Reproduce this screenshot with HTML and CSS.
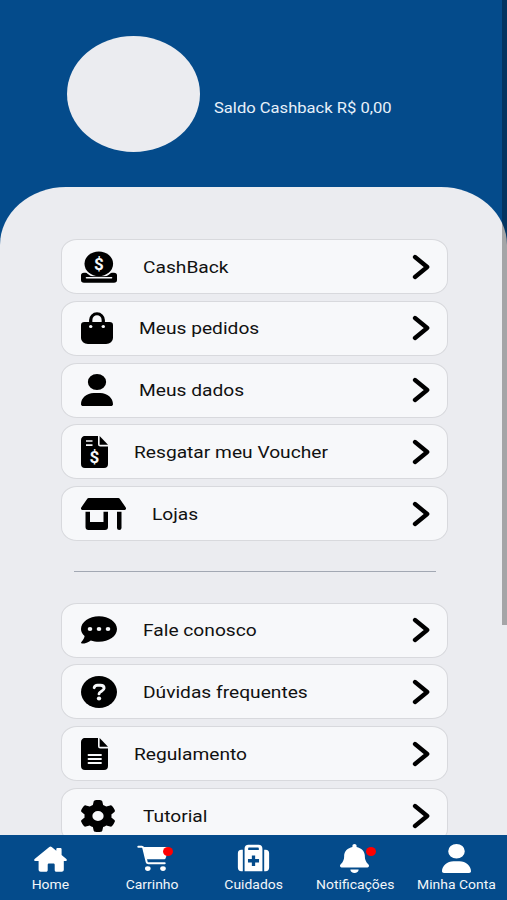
FILE: index.html
```html
<!DOCTYPE html>
<html lang="pt-BR">
<head>
    <meta charset="UTF-8">
    <meta name="viewport" content="width=device-width, initial-scale=1.0">
    <title>Minha Conta</title>
    <link rel="stylesheet" href="styles.css">
</head>
<body>

<svg class="defs" width="0" height="0">
    <symbol id="chevron" viewBox="0 0 18 26">
        <path d="M3 3l12.200 10L3 23" fill="none" stroke="#000" stroke-width="4.300" stroke-linecap="round" stroke-linejoin="round"/>
    </symbol>
</svg>

<header class="header">
    <div class="avatar"></div>
    <p class="saldo">Saldo Cashback R$ 0,00</p>
</header>

<main class="content">
    <div class="menu">
        <a class="item">
            <svg class="icon" width="36" height="32" viewBox="0 0 36 32">
                <path d="M3 21.700h30a3 2.700 0 0 1 3 2.700V29a3 2.700 0 0 1-3 2.700H3A3 2.700 0 0 1 0 29v-4.600a3 2.700 0 0 1 3-2.700z"/>
                <ellipse cx="17.800" cy="12.900" rx="16" ry="13.900" fill="#f7f8fa"/>
                <path d="M4 25.200h28v3H4z"/>
                <ellipse cx="17.800" cy="12.800" rx="14.300" ry="12.400"/>
                <path d="M5.500 26.700h25" stroke="#f7f8fa" stroke-width="1.600" stroke-linecap="round"/>
                <text class="sign" x="17.800" y="18.800">$</text>
            </svg>
            <span>CashBack</span>
            <svg class="chevron" width="18" height="26"><use href="#chevron"/></svg>
        </a>
        <a class="item">
            <svg class="icon" width="32" height="32" viewBox="0 0 448 512" preserveAspectRatio="none">
                <path d="M136 176v-48a88 100 0 0 1 176 0v48" fill="none" stroke="#000" stroke-width="46"/>
                <path d="M48 160h352a48 48 0 0 1 48 48v208a96 96 0 0 1-96 96H96a96 96 0 0 1-96-96V208a48 48 0 0 1 48-48z"/>
                <circle cx="136" cy="232" r="24" fill="#f7f8fa"/>
                <circle cx="312" cy="232" r="24" fill="#f7f8fa"/>
            </svg>
            <span>Meus pedidos</span>
            <svg class="chevron" width="18" height="26"><use href="#chevron"/></svg>
        </a>
        <a class="item">
            <svg class="icon" width="32" height="32" viewBox="0 0 448 512" preserveAspectRatio="none">
                <path d="M224 256A128 128 0 1 0 224 0a128 128 0 1 0 0 256zm-45.700 48C79.800 304 0 383.800 0 482.300C0 498.700 13.300 512 29.700 512H418.300c16.400 0 29.700-13.300 29.700-29.700C448 383.800 368.200 304 269.700 304H178.300z"/>
            </svg>
            <span>Meus dados</span>
            <svg class="chevron" width="18" height="26"><use href="#chevron"/></svg>
        </a>
        <a class="item">
            <svg class="icon" width="27" height="32" viewBox="0 0 27 32">
                <path d="M4.500 0h12.500v8a2.500 2.500 0 0 0 2.500 2.500H27V28a4 4 0 0 1-4 4H4a4 4 0 0 1-4-4V4a4 4 0 0 1 4.500-4z"/>
                <path d="M18.600 0L27 8.700h-8.400z"/>
                <path d="M5 5h6.500M5 9.200h6.500" stroke="#f7f8fa" stroke-width="1.700"/>
                <text class="sign" x="13.500" y="26.800">$</text>
            </svg>
            <span>Resgatar meu Voucher</span>
            <svg class="chevron" width="18" height="26"><use href="#chevron"/></svg>
        </a>
        <a class="item">
            <svg class="icon" width="45" height="32" viewBox="0 0 45 32">
                <path d="M7.800 0h29.400a2 2 0 0 1 1.700.9l5.700 8.300c1 1.600.1 2.800-1.600 2.800H2c-1.700 0-2.600-1.200-1.600-2.800L6.100.9A2 2 0 0 1 7.800 0z"/>
                <path d="M4.500 13.800H9V24h13.500V13.800H27V29a3 3 0 0 1-3 3H7.500a3 3 0 0 1-3-3zM36 13.800h4.500V30a2.250 2 0 0 1-4.500 0z"/>
            </svg>
            <span>Lojas</span>
            <svg class="chevron" width="18" height="26"><use href="#chevron"/></svg>
        </a>
    </div>

    <hr class="divider">

    <div class="menu">
        <a class="item">
            <svg class="icon" width="36" height="32" viewBox="0 0 36 32">
                <path d="M18 2.300c9.900 0 18 5.700 18 12.800s-8.100 12.700-18 12.700c-3 0-5.800-.5-8.200-1.400C7.400 28.200 4.200 29.600 1 29.600c-1 0-1.300-.9-.6-1.600 1.700-1.700 3-3.800 3.200-5.900C1.300 20.100 0 17.700 0 15.100 0 8 8.100 2.300 18 2.300z"/>
                <g fill="#f7f8fa"><ellipse cx="9" cy="15" rx="2.300" ry="2"/><ellipse cx="18" cy="15" rx="2.300" ry="2"/><ellipse cx="27" cy="15" rx="2.300" ry="2"/></g>
            </svg>
            <span>Fale conosco</span>
            <svg class="chevron" width="18" height="26"><use href="#chevron"/></svg>
        </a>
        <a class="item">
            <svg class="icon" width="36" height="32" viewBox="0 0 36 32">
                <ellipse cx="18" cy="16" rx="18" ry="16"/>
                <path d="M13.200 11.700c.4-1.600 1.500-2.400 3.300-2.400h2.800c2.300 0 3.800 1.200 3.800 3 0 2.800-5.100 2.900-5.100 5.600" fill="none" stroke="#f7f8fa" stroke-width="2.900" stroke-linecap="round"/>
                <ellipse cx="18" cy="22.600" rx="2.200" ry="2" fill="#f7f8fa"/>
            </svg>
            <span>Dúvidas frequentes</span>
            <svg class="chevron" width="18" height="26"><use href="#chevron"/></svg>
        </a>
        <a class="item">
            <svg class="icon" width="27" height="32" viewBox="0 0 27 32">
                <path d="M4.500 0h12.500v8a2.500 2.500 0 0 0 2.500 2.500H27V28a4 4 0 0 1-4 4H4a4 4 0 0 1-4-4V4a4 4 0 0 1 4.500-4z"/>
                <path d="M18.600 0L27 8.700h-8.400z"/>
                <path d="M7.500 17h12.500M7.500 21h12.500M7.500 25h12.500" stroke="#f7f8fa" stroke-width="1.800" stroke-linecap="round"/>
            </svg>
            <span>Regulamento</span>
            <svg class="chevron" width="18" height="26"><use href="#chevron"/></svg>
        </a>
        <a class="item">
            <svg class="icon gear" width="36" height="32" viewBox="0 0 512 512" preserveAspectRatio="none">
                <path d="M495.900 166.600c3.200 8.700 .5 18.400-6.400 24.600l-43.300 39.400c1.100 8.300 1.700 16.800 1.700 25.400s-.6 17.100-1.700 25.400l43.300 39.400c6.900 6.200 9.600 15.900 6.400 24.600c-4.400 11.900-9.700 23.300-15.800 34.300l-4.700 8.100c-6.600 11-14 21.400-22.100 31.200c-5.900 7.200-15.700 9.600-24.500 6.800l-55.700-17.700c-13.400 10.300-28.200 18.900-44 25.400l-12.500 57.100c-2 9.100-9 16.300-18.200 17.800c-13.800 2.300-28 3.500-42.500 3.500s-28.700-1.200-42.500-3.500c-9.200-1.500-16.200-8.700-18.200-17.800l-12.500-57.100c-15.800-6.500-30.600-15.100-44-25.400L83.100 425.900c-8.800 2.800-18.600 .3-24.500-6.800c-8.100-9.800-15.500-20.200-22.100-31.200l-4.700-8.100c-6.100-11-11.400-22.400-15.800-34.300c-3.200-8.700-.5-18.400 6.400-24.600l43.300-39.400C64.600 273.100 64 264.600 64 256s.6-17.100 1.700-25.400L22.400 191.200c-6.900-6.200-9.600-15.900-6.400-24.600c4.400-11.900 9.700-23.300 15.800-34.300l4.700-8.100c6.600-11 14-21.400 22.100-31.200c5.900-7.200 15.700-9.600 24.500-6.800l55.700 17.700c13.400-10.300 28.200-18.900 44-25.400l12.500-57.100c2-9.100 9-16.300 18.200-17.800C227.300 1.200 241.500 0 256 0s28.700 1.200 42.500 3.500c9.200 1.500 16.200 8.700 18.200 17.800l12.500 57.100c15.800 6.500 30.600 15.100 44 25.400l55.700-17.700c8.800-2.800 18.600-.3 24.500 6.800c8.100 9.800 15.500 20.200 22.100 31.200l4.700 8.100c6.100 11 11.400 22.400 15.800 34.300zM256 336a80 80 0 1 0 0-160 80 80 0 1 0 0 160z"/>
            </svg>
            <span>Tutorial</span>
            <svg class="chevron" width="18" height="26"><use href="#chevron"/></svg>
        </a>
    </div>
</main>

<div class="scrollbar"></div>

<nav class="navbar">
    <a class="tab">
        <svg width="33" height="29" viewBox="0 -1.500 33 29">
            <path d="M15.300 1.600a1.900 1.900 0 0 1 2.400 0l4.600 3.700V3.700c0-.9.500-1.300 1.400-1.300h2.500c.9 0 1.400.4 1.400 1.300v5.700l4.500 3.800c1.500 1.300.7 2.400-.8 2.400h-1.500v8.700c0 1.200-.9 2-2.100 2h-5.200c-1.200 0-1.800-.7-1.800-1.800v-5.200c0-.9-.6-1.400-1.500-1.400h-4c-.9 0-1.500.5-1.500 1.400v5.200c0 1.100-.6 1.800-1.800 1.800H6.700c-1.200 0-2.100-.8-2.100-2v-8.700H1.700c-1.500 0-2.300-1.100-.8-2.400z"/>
        </svg>
        <span>Home</span>
    </a>
    <a class="tab">
        <svg width="33" height="29" viewBox="-1 0 33 29">
            <path d="M1.300 2.800h3.500c.9 0 1.300.3 1.500 1.100L9.700 18c.2.900.8 1.300 1.700 1.300h16.300" fill="none" stroke="#fff" stroke-width="2" stroke-linecap="round"/>
            <path d="M6.500 3h23.600c1.100 0 1.800.8 1.500 1.800l-2.800 8.900c-.3 1.100-1 1.600-2.200 1.600H9.500z"/>
            <ellipse cx="10.800" cy="24.600" rx="2.800" ry="2.400"/>
            <ellipse cx="26" cy="24.600" rx="2.800" ry="2.400"/>
        </svg>
        <i class="dot"></i>
        <span>Carrinho</span>
    </a>
    <a class="tab">
        <svg width="33" height="29" viewBox="-.5 -.5 34 29" preserveAspectRatio="none">
            <path d="M5.500 5.200v21.500H4a3.600 3.600 0 0 1-3.600-3.600V8.800A3.600 3.600 0 0 1 4 5.200zM27.500 5.200v21.500H29a3.600 3.600 0 0 0 3.600-3.600V8.800A3.600 3.600 0 0 0 29 5.200z"/>
            <path d="M7.300 26.700V4.200C7.300 1.700 8.800.3 11.300.3h10.400c2.500 0 4 1.400 4 3.900v22.500zM11 4.200v1.300h11V4.200c0-.7-.4-1.100-1.100-1.100h-8.800c-.7 0-1.100.4-1.100 1.100z" fill-rule="evenodd"/>
            <path d="M16.500 11v10.400M10.800 16.200h11.400" stroke="#044b8b" stroke-width="3.400"/>
        </svg>
        <span>Cuidados</span>
    </a>
    <a class="tab">
        <svg width="29" height="29" viewBox="0 0 448 512" preserveAspectRatio="none">
            <path d="M224 0c-17.700 0-32 14.300-32 32v19.200C119 66 64 130.600 64 208v18.800c0 47-17.300 92.400-48.500 127.600l-7.400 8.300c-8.400 9.400-10.400 22.900-5.300 34.400S19.400 416 32 416h384c12.600 0 24-7.400 29.200-18.900s3.100-25-5.300-34.400l-7.400-8.300C401.300 319.200 384 273.900 384 226.800V208c0-77.400-55-142-128-156.800V32c0-17.700-14.300-32-32-32zm45.300 493.300c12-12 18.700-28.300 18.700-45.300H160c0 17 6.700 33.300 18.700 45.300S207 512 224 512s33.300-6.700 45.300-18.700z"/>
        </svg>
        <i class="dot"></i>
        <span>Notificações</span>
    </a>
    <a class="tab">
        <svg width="29" height="29" viewBox="0 0 448 512" preserveAspectRatio="none">
            <path d="M224 256A128 128 0 1 0 224 0a128 128 0 1 0 0 256zm-45.700 48C79.800 304 0 383.800 0 482.300C0 498.700 13.300 512 29.700 512H418.300c16.400 0 29.700-13.300 29.700-29.700C448 383.800 368.200 304 269.700 304H178.300z"/>
        </svg>
        <span>Minha Conta</span>
    </a>
</nav>

</body>
</html>
```
FILE: styles.css
```css
* {
    box-sizing: border-box;
}
body {
    font-family: 'Roboto', sans-serif;
    height: 900px;
    margin: 0;
    background-color: #044b8b;
    overflow: hidden;
}
.defs {
    display: none;
}
.header {
    display: flex;
    align-items: center;
    height: 187px;
    padding-left: 67px;
}
.avatar {
    width: 133px;
    height: 116px;
    border-radius: 50%;
    background-color: #ebecf0;
}
.saldo {
    margin: 30px 0 0 14px;
    color: #e8f1fa;
    font-size: 14.500px;
    transform: scaleX(1.143);
    transform-origin: left;
}
.content {
    height: 713px;
    padding: 52px 59px 0 61px;
    border-radius: 66px 66px 0 0 / 58px 58px 0 0;
    background-color: #ebecf0;
}
.menu {
    display: flex;
    flex-direction: column;
    gap: 6.800px;
}
.item {
    display: flex;
    align-items: center;
    height: 55px;
    padding-left: 19px;
    border: 1px solid #d8d9dd;
    border-radius: 16px / 14px;
    background-color: #f7f8fa;
    color: #111;
    font-size: 16.800px;
}
.item span {
    margin-left: 26px;
    white-space: nowrap;
    transform: scaleX(1.143);
    transform-origin: left;
}
.icon {
    margin-left: -0.500px;
}
.gear {
    margin-left: -1.500px;
    margin-right: 1px;
}
.chevron {
    margin: 0 17px 0 auto;
}
.sign {
    fill: #f7f8fa;
    font-size: 17px;
    font-weight: bold;
    text-anchor: middle;
}
.divider {
    height: 1.500px;
    margin: 29.500px 12px 30.500px 13px;
    border: none;
    background-color: #a2a8b3;
}
.scrollbar {
    position: absolute;
    top: 0;
    right: 0;
    width: 5px;
    height: 625px;
    background-color: rgba(0, 0, 0, 0.3);
}
.navbar {
    position: absolute;
    left: 0;
    right: 0;
    bottom: 0;
    display: flex;
    height: 65px;
    padding-top: 9px;
    background-color: #044b8b;
}
.tab {
    position: relative;
    flex: 1;
    display: flex;
    flex-direction: column;
    align-items: center;
    color: #f2f6fa;
    font-size: 12.200px;
}
.tab svg {
    fill: #fff;
}
.tab span {
    margin-top: 5px;
    white-space: nowrap;
    transform: scaleX(1.143);
}
.dot {
    position: absolute;
    top: 3px;
    left: 62px;
    width: 10px;
    height: 9px;
    border-radius: 50%;
    background-color: #f00;
}
```
